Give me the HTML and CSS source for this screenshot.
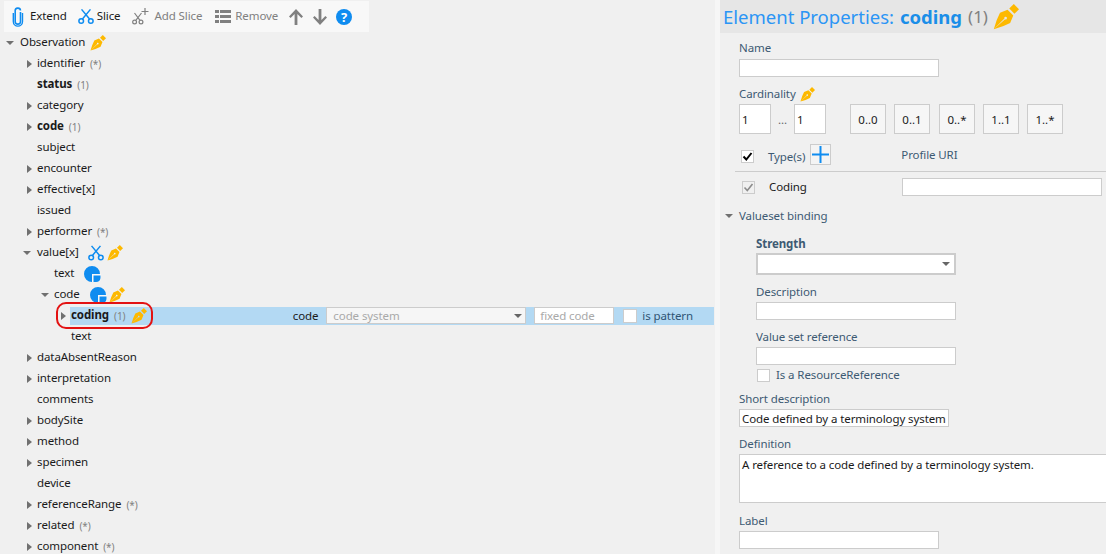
FILE: index.html
```html
<!DOCTYPE html>
<html lang="en">
<head>
  <meta charset="UTF-8">
  <title>Element Properties</title>
  <link rel="stylesheet" href="styles.css">
</head>
<body>
  <svg class="defs" width="0" height="0">
    <symbol id="nib" viewBox="0 0 20 20">
      <path d="M12.5 3.5 16 0 20 4 16.5 7.5Z"/>
      <path fill-rule="evenodd" d="M11.2 4.4 15.6 8.8 13.2 14.6Q8 17.4 .6 19.4Q2.6 12 5.4 6.8ZM.6 19.4 8.8 11.2A1 1 0 1 1 9.3 11.7Z"/>
    </symbol>
    <symbol id="pie" viewBox="0 0 17 16">
      <path d="M8 0A8 8 0 1 0 8 16V8H16A8 8 0 0 0 8 0Z"/>
      <path class="pie-gap" d="M8 8H17V12A4 4 0 0 1 13 16H8Z"/>
      <path d="M9.5 9.5H16.5V12A4.5 4.5 0 0 1 12 16H9.5Z"/>
    </symbol>
    <symbol id="scissors" viewBox="0 0 18 18">
      <g fill="none" stroke="currentColor" stroke-width="1.7">
        <circle cx="3.6" cy="14" r="2.6"/>
        <circle cx="14.4" cy="14" r="2.6"/>
        <path d="M5 11.8 14 1M13 11.8 4 1"/>
      </g>
    </symbol>
    <symbol id="caret-right" viewBox="0 0 10 10"><path d="M4 1 9 5 4 9Z"/></symbol>
    <symbol id="caret-down" viewBox="0 0 10 10"><path d="M0 3H8L4 7Z"/></symbol>
  </svg>

  <div class="app">
    <div class="tree-pane">
      <div class="toolbar">
        <span class="tool">
          <svg class="tool-icon blue" width="12" height="20" viewBox="0 0 12 20"><path fill="none" stroke="currentColor" stroke-width="1.6" d="M8.5 5V14.5A2.6 2.6 0 0 1 3.2 14.5V4A2.6 2.6 0 0 1 8.5 3.5"/><path fill="none" stroke="currentColor" stroke-width="1.4" d="M10.5 6V14.5A4.6 4.6 0 0 1 1.3 14.5V6"/></svg>
          <span class="tool-text">Extend</span>
        </span>
        <span class="tool tool-slice">
          <svg class="blue" width="16" height="17"><use href="#scissors"/></svg>
          <span class="tool-text">Slice</span>
        </span>
        <span class="tool tool-add off">
          <svg width="17" height="17" viewBox="0 0 17 17"><g fill="none" stroke="currentColor" stroke-width="1.2"><circle cx="2.6" cy="14" r="1.9"/><circle cx="9" cy="14" r="1.9"/><path d="M3.8 12.4 9.5 5M8 12.4 2.5 5M13 0V7M9.5 3.5H16.5"/></g></svg>
          <span class="tool-text">Add Slice</span>
        </span>
        <span class="tool tool-remove off">
          <svg width="16" height="13" viewBox="0 0 16 13"><path fill="currentColor" d="M0 0H4V3H0ZM5 0H16V3H5ZM0 5H4V8H0ZM5 5H16V8H5ZM0 10H4V13H0ZM5 10H16V13H5Z"/></svg>
          <span class="tool-text">Remove</span>
        </span>
        <svg class="tool-arrow off" width="14" height="16" viewBox="0 0 14 16"><path fill="currentColor" d="M7 0 14 7.5 12.4 9 8.4 5V16H5.6V5L1.6 9 0 7.5Z"/></svg>
        <svg class="tool-arrow off" width="14" height="16" viewBox="0 0 14 16"><path fill="currentColor" d="M7 16 14 8.5 12.4 7 8.4 11V0H5.6V11L1.6 7 0 8.5Z"/></svg>
        <span class="help">?</span>
      </div>

      <div class="row lvl0"><svg class="tog" width="10" height="10"><use href="#caret-down"/></svg><span>Observation</span><svg class="nib" width="16" height="16"><use href="#nib"/></svg></div>
      <div class="row lvl1"><svg class="tog" width="10" height="10"><use href="#caret-right"/></svg><span>identifier</span><span class="card">(*)</span></div>
      <div class="row lvl1"><span class="no-tog"></span><b>status</b><span class="card">(1)</span></div>
      <div class="row lvl1"><svg class="tog" width="10" height="10"><use href="#caret-right"/></svg><span>category</span></div>
      <div class="row lvl1"><svg class="tog" width="10" height="10"><use href="#caret-right"/></svg><b>code</b><span class="card">(1)</span></div>
      <div class="row lvl1"><span class="no-tog"></span><span>subject</span></div>
      <div class="row lvl1"><svg class="tog" width="10" height="10"><use href="#caret-right"/></svg><span>encounter</span></div>
      <div class="row lvl1"><svg class="tog" width="10" height="10"><use href="#caret-right"/></svg><span>effective[x]</span></div>
      <div class="row lvl1"><span class="no-tog"></span><span>issued</span></div>
      <div class="row lvl1"><svg class="tog" width="10" height="10"><use href="#caret-right"/></svg><span>performer</span><span class="card">(*)</span></div>
      <div class="row lvl1"><svg class="tog" width="10" height="10"><use href="#caret-down"/></svg><span>value[x]</span><svg class="row-cut blue" width="16" height="16"><use href="#scissors"/></svg><svg class="nib nib-tight" width="16" height="16"><use href="#nib"/></svg></div>
      <div class="row lvl2"><span class="no-tog"></span><span>text</span><svg class="pie" width="17" height="16"><use href="#pie"/></svg></div>
      <div class="row lvl2"><svg class="tog" width="10" height="10"><use href="#caret-down"/></svg><span>code</span><svg class="pie pie-code" width="17" height="16"><use href="#pie"/></svg><svg class="nib nib-over" width="16" height="16"><use href="#nib"/></svg></div>
      <div class="row lvl3 row-selected">
        <svg class="tog" width="10" height="10"><use href="#caret-right"/></svg>
        <div class="row-bar">
          <b>coding</b><span class="card">(1)</span><svg class="nib" width="16" height="16"><use href="#nib"/></svg>
          <div class="row-fields">
            <span class="bar-label">code</span>
            <div class="combo-system">code system<i class="caret"></i></div>
            <input class="fixed-code" placeholder="fixed code">
            <span class="check check-plain"></span>
            <span class="is-pattern">is pattern</span>
          </div>
        </div>
        <span class="ring"></span>
      </div>
      <div class="row lvl3"><span class="no-tog"></span><span>text</span></div>
      <div class="row lvl1"><svg class="tog" width="10" height="10"><use href="#caret-right"/></svg><span>dataAbsentReason</span></div>
      <div class="row lvl1"><svg class="tog" width="10" height="10"><use href="#caret-right"/></svg><span>interpretation</span></div>
      <div class="row lvl1"><span class="no-tog"></span><span>comments</span></div>
      <div class="row lvl1"><svg class="tog" width="10" height="10"><use href="#caret-right"/></svg><span>bodySite</span></div>
      <div class="row lvl1"><svg class="tog" width="10" height="10"><use href="#caret-right"/></svg><span>method</span></div>
      <div class="row lvl1"><svg class="tog" width="10" height="10"><use href="#caret-right"/></svg><span>specimen</span></div>
      <div class="row lvl1"><span class="no-tog"></span><span>device</span></div>
      <div class="row lvl1"><svg class="tog" width="10" height="10"><use href="#caret-right"/></svg><span>referenceRange</span><span class="card">(*)</span></div>
      <div class="row lvl1"><svg class="tog" width="10" height="10"><use href="#caret-right"/></svg><span>related</span><span class="card">(*)</span></div>
      <div class="row lvl1"><svg class="tog" width="10" height="10"><use href="#caret-right"/></svg><span>component</span><span class="card">(*)</span></div>
    </div>

    <div class="splitter"></div>

    <div class="props-pane">
      <div class="props-head">
        <span class="head-title">Element Properties:</span>
        <b class="head-name">coding</b>
        <span class="head-card">(1)</span>
        <svg class="nib" width="26" height="26"><use href="#nib"/></svg>
      </div>

      <div class="props-body">
        <label class="lbl lbl-name">Name</label>
        <input class="txt w200">

        <label class="lbl lbl-card">Cardinality <svg class="nib" width="15" height="15"><use href="#nib"/></svg></label>
        <div class="card-row">
          <input class="card-input" value="1">
          <span class="dots">...</span>
          <input class="card-input" value="1">
          <div class="card-btns">
            <button class="card-btn">0..0</button>
            <button class="card-btn">0..1</button>
            <button class="card-btn">0..*</button>
            <button class="card-btn">1..1</button>
            <button class="card-btn">1..*</button>
          </div>
        </div>

        <div class="types-head">
          <span class="check check-types"><svg width="11" height="11" viewBox="0 0 11 11"><path d="M1.5 5.5 4.3 8.5 9.5 2" fill="none" stroke="#000" stroke-width="2"/></svg></span>
          <span class="lbl types-label">Type(s)</span>
          <button class="add-type"><svg width="17" height="17" viewBox="0 0 17 17"><path fill="#0f8cf0" d="M7.5 0H9.5V7.5H17V9.5H9.5V17H7.5V9.5H0V7.5H7.5Z"/></svg></button>
          <span class="lbl profile-label">Profile URI</span>
        </div>

        <div class="type-row">
          <span class="check check-off"><svg width="11" height="11" viewBox="0 0 11 11"><path d="M1.5 5.5 4.3 8.5 9.5 2" fill="none" stroke="#8c8c8c" stroke-width="1.6"/></svg></span>
          <span class="type-name">Coding</span>
          <input class="txt profile-input">
        </div>

        <div class="binding-head"><svg class="tog" width="10" height="10"><use href="#caret-down"/></svg><span class="lbl">Valueset binding</span></div>
        <div class="binding">
          <label class="lbl lbl-strength">Strength</label>
          <div class="strength-select"><i class="caret"></i></div>
          <label class="lbl">Description</label>
          <input class="txt w200">
          <label class="lbl">Value set reference</label>
          <input class="txt w200">
          <div class="ref-check"><span class="check check-plain"></span><span class="lbl">Is a ResourceReference</span></div>
        </div>

        <label class="lbl lbl-short">Short description</label>
        <input class="txt short-input" value="Code defined by a terminology system">
        <label class="lbl">Definition</label>
        <textarea class="def-area">A reference to a code defined by a terminology system.</textarea>
        <label class="lbl lbl-label">Label</label>
        <input class="txt w200">
      </div>
    </div>
  </div>
</body>
</html>
```

FILE: styles.css
```css
html, body {
  height: 100%;
  margin: 0;
  overflow: hidden;
}
body {
  font-family: "Noto Sans", "Open Sans", sans-serif;
  font-size: 11.5px;
  letter-spacing: -0.1px;
  color: #1a1a1a;
  background: #f0f0f0;
}
.defs {
  position: absolute;
}
.app {
  display: flex;
  height: 554px;
  overflow: hidden;
}
.blue {
  color: #0f8cf0;
}
.off {
  color: #808080;
}

/* toolbar */
.toolbar {
  display: flex;
  align-items: center;
  width: 365px;
  height: 31px;
  margin: 1px 0 0 4px;
  background: #f8f8f8;
  box-sizing: border-box;
  padding-left: 8px;
}
.tool {
  display: flex;
  align-items: center;
}
.tool-text {
  margin-left: 6px;
  padding-bottom: 2px;
}
.tool-slice {
  margin-left: 11px;
}
.tool-slice .tool-text {
  margin-left: 3px;
}
.tool-add {
  margin-left: 12px;
}
.tool-add .tool-text {
  margin-left: 5px;
}
.tool-remove .tool-text {
  margin-left: 4px;
}
.tool-remove {
  margin-left: 13px;
}
.tool-arrow {
  margin-left: 11px;
}
.tool-arrow + .tool-arrow {
  margin-left: 10px;
}
.help {
  width: 16px;
  height: 16px;
  margin-left: 9px;
  border-radius: 50%;
  background: #0f8cf0;
  color: #fff;
  font-weight: bold;
  font-size: 13px;
  line-height: 16px;
  text-align: center;
}

/* tree */
.tree-pane {
  width: 715px;
  flex: none;
}
.row {
  display: flex;
  align-items: center;
  position: relative;
  height: 21px;
  white-space: nowrap;
}
.row > span,
.row > b,
.row-bar > b {
  padding-bottom: 2px;
}
.lvl0 { padding-left: 6px; }
.lvl1 { padding-left: 23px; }
.lvl2 { padding-left: 41px; }
.lvl3 { padding-left: 57px; }
.row-selected {
  padding-right: 1px;
}
.tog {
  flex: none;
  margin-right: 4px;
  fill: #707070;
}
.lvl2 .tog {
  margin-right: 3px;
}
.no-tog {
  width: 14px;
  flex: none;
}
.lvl2 .no-tog {
  width: 13px;
}
.row .card {
  margin-left: 5px;
  padding-bottom: 0;
  font-size: 10px;
  color: #808080;
}
.nib {
  fill: #fdb900;
  margin-left: 5px;
  flex: none;
}
.nib-tight {
  margin-left: 3px;
}
.nib-over {
  margin-left: 2px;
}
.row-cut {
  margin-left: 9px;
}
.pie {
  fill: #0f8cf0;
  margin-left: 10px;
}
.pie-gap {
  fill: #f8f8f8;
}
.pie-code {
  margin-left: 10px;
}
.row-bar {
  display: flex;
  align-items: center;
  flex: 1;
  height: 18px;
  margin-left: -1px;
  padding-left: 1px;
  background: #b3d9f3;
}
.row-bar .nib {
  margin-left: 6px;
}
.row-fields {
  display: flex;
  align-items: center;
  margin-left: auto;
  padding-right: 21px;
}
.bar-label {
  margin-right: 8px;
}
.combo-system {
  display: flex;
  align-items: center;
  justify-content: space-between;
  box-sizing: border-box;
  width: 200px;
  height: 17px;
  padding: 0 2px 0 6px;
  background: #f6f6f6;
  border: 1px solid #ccc;
  color: #a9a9a9;
}
.caret {
  width: 0;
  height: 0;
  margin-right: 1px;
  border: 4px solid transparent;
  border-top: 4px solid #666;
  border-bottom: 0;
}
.fixed-code {
  box-sizing: border-box;
  width: 80px;
  height: 17px;
  margin-left: 8px;
  padding: 0 5px;
  border: 1px solid #ccc;
  font: inherit;
  letter-spacing: inherit;
}
.fixed-code::placeholder {
  color: #a9a9a9;
}
.check {
  display: flex;
  align-items: center;
  justify-content: center;
  box-sizing: border-box;
  width: 13px;
  height: 13px;
  flex: none;
  background: #fff;
  border: 1px solid #ccc;
}
.check-off {
  background: #f0f0f0;
}
.row-fields .check-plain {
  width: 14px;
  height: 14px;
  margin-left: 9px;
}
.is-pattern {
  margin-left: 5px;
  color: #2f5474;
}
.ring {
  position: absolute;
  left: 56px;
  top: -3px;
  width: 97px;
  height: 27px;
  box-sizing: border-box;
  border: 2px solid #e31212;
  border-radius: 10px;
}

.splitter {
  width: 5px;
  flex: none;
  background: #f6f6f6;
}

/* properties */
.props-pane {
  flex: 1;
  min-width: 0;
  overflow: hidden;
}
.props-head {
  display: flex;
  align-items: center;
  height: 33px;
  padding-left: 3px;
  background: #e6e6e6;
  font-size: 18.5px;
  letter-spacing: 0;
  white-space: nowrap;
}
.head-title {
  color: #2b95f5;
}
.head-name {
  margin-left: 6px;
  color: #1b8ee8;
}
.head-card {
  margin-left: 6px;
  color: #808080;
  font-size: 17px;
}
.props-body {
  padding-left: 19px;
}
.lbl {
  display: block;
  height: 16px;
  margin-top: 9px;
  margin-bottom: 2px;
  line-height: 16px;
  color: #3d5a73;
  white-space: nowrap;
}
.txt {
  display: block;
  box-sizing: border-box;
  height: 18px;
  padding: 0 2px;
  background: #fff;
  border: 1px solid #ccc;
  font: inherit;
  letter-spacing: inherit;
  color: #1a1a1a;
}
.w200 {
  width: 200px;
}
.lbl-name {
  margin-top: 7px;
  margin-bottom: 3px;
}
.lbl-card {
  display: flex;
  align-items: center;
}
.lbl-card .nib {
  margin-left: 4px;
}
.card-row {
  display: flex;
  align-items: center;
}
.card-input {
  box-sizing: border-box;
  width: 32px;
  height: 30px;
  padding: 0 2px;
  background: #fff;
  border: 1px solid #ccc;
  font: inherit;
  color: #1a1a1a;
}
.dots {
  width: 23px;
  text-align: center;
  color: #666;
}
.card-btns {
  display: flex;
  gap: 8px;
  margin-left: 24px;
}
.card-btn {
  box-sizing: border-box;
  width: 36px;
  height: 30px;
  padding: 0;
  background: #f6f6f6;
  border: 1px solid #ccc;
  font: inherit;
  color: #1a1a1a;
}
.card-btn:nth-child(3) {
  margin-left: 1px;
}
.types-head {
  display: flex;
  align-items: center;
  height: 28px;
  margin: 10px 0 0 -4px;
  padding: 0 0 6px 6px;
  box-sizing: border-box;
  border-bottom: 1px solid #ccc;
}
.check-types {
  margin-top: 4px;
}
.types-label,
.profile-label {
  margin: 0;
}
.types-label {
  margin-top: 4px;
  margin-left: 14px;
}
.add-type {
  display: flex;
  align-items: center;
  justify-content: center;
  box-sizing: border-box;
  width: 21px;
  height: 21px;
  margin-left: 5px;
  padding: 0;
  background: #f4f4f4;
  border: 1px solid #ccc;
}
.profile-label {
  margin-left: 70px;
}
.type-row {
  display: flex;
  align-items: center;
  height: 18px;
  margin-top: 6px;
  padding-left: 3px;
}
.type-name {
  width: 133px;
  margin-left: 14px;
  padding-bottom: 2px;
}
.profile-input {
  width: 200px;
}
.binding-head {
  display: flex;
  align-items: center;
  height: 16px;
  margin: 12px 0 0 -14px;
}
.binding-head .lbl {
  margin: 0;
}
.binding-head .tog {
  margin-right: 4px;
}
.binding {
  padding-left: 17px;
}
.lbl-strength {
  margin-top: 12px;
  margin-bottom: 1px;
  font-weight: bold;
}
.strength-select {
  display: flex;
  align-items: center;
  justify-content: flex-end;
  box-sizing: border-box;
  width: 200px;
  height: 22px;
  padding-right: 3px;
  background: #fff;
  border: 2px solid #ccc;
}
.ref-check {
  display: flex;
  align-items: center;
  height: 16px;
  margin-top: 2px;
  padding-left: 1px;
}
.ref-check .lbl {
  margin: 0 0 0 6px;
}
.lbl-short {
  margin-top: 8px;
}
.short-input {
  width: 210px;
}
.def-area {
  display: block;
  box-sizing: border-box;
  width: 400px;
  height: 49px;
  padding: 2px;
  background: #fff;
  border: 1px solid #ccc;
  font: inherit;
  letter-spacing: inherit;
  color: #1a1a1a;
  resize: none;
}
.lbl-label {
  margin-top: 10px;
}
```
